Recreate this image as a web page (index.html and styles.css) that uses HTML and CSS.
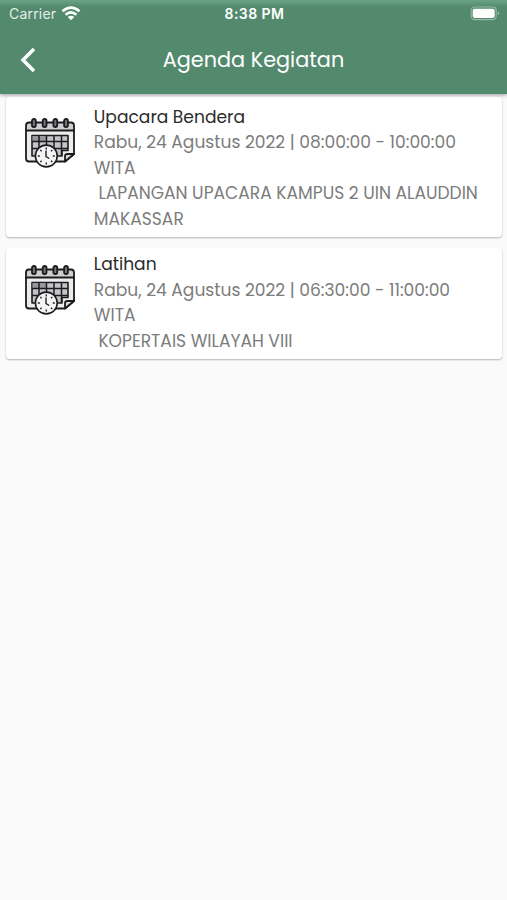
FILE: index.html
```html
<!DOCTYPE html>
<html lang="id">
<head>
<meta charset="utf-8">
<title>Agenda Kegiatan</title>
<link rel="stylesheet" href="styles.css">
</head>
<body>
<svg class="defs" width="0" height="0" aria-hidden="true">
  <symbol id="calendar" viewBox="0 0 50 50">
    <g stroke="#1c1c1f" stroke-width="1.8" stroke-linejoin="round">
      <path d="M1 13V7.500Q1 4.500 4 4.500H46Q49 4.500 49 7.500V13Z" fill="#cfcfd1"/>
      <path d="M1 12.500V40.500Q1 43.500 4 43.500H40L49 36V12.500Z" fill="#ececec"/>
      <path d="M40 43.500V38Q40 36 42.500 36H49Z" fill="#dcdcdc"/>
      <path d="M7 17.500H43V32.500H37V38H7Z" fill="#c4c4c8" stroke-width="1.600"/>
      <path d="M7.500 18H21V23H7.500Z" fill="#98989c" stroke="none"/>
      <path d="M7 23.500H43M7 30.500H43M14 17.500V38M21.500 17.500V36M29 17.500V36M36.500 17.500V38" fill="none" stroke-width="1.500"/>
      <rect x="7" y="1" width="3.800" height="8" rx="1.800" fill="#77777b"/>
      <rect x="17.700" y="1" width="3.800" height="8" rx="1.800" fill="#77777b"/>
      <rect x="28.400" y="1" width="3.800" height="8" rx="1.800" fill="#77777b"/>
      <rect x="39.100" y="1" width="3.800" height="8" rx="1.800" fill="#77777b"/>
      <circle cx="21.300" cy="38" r="10.900" fill="#f4f4f4" stroke-width="1.600"/>
    </g>
    <path d="M21.300 29.500V31.500M21.300 44.500V46.500M12.800 38H14.800M27.800 38H29.800M15.300 32L16.600 33.300M27.300 32L26 33.300M15.300 44L16.600 42.700M27.300 44L26 42.700M21 32.500V38.500L24.300 40.500" fill="none" stroke="#222225" stroke-width="1.400"/>
  </symbol>
</svg>
<header class="header">
  <div class="status">
    <div class="carrier"><span class="carrier-name">Carrier</span>
      <svg class="wifi" width="20" height="15" viewBox="0 0 20 15" fill="none" stroke="#fff" stroke-width="2.700"><path d="M1.500 5.300Q10-2 18.500 5.300M4.600 8.700Q10 4 15.400 8.700"/><path d="M10 14.200L6.800 11Q10 8.400 13.200 11Z" fill="#fff" stroke="none"/></svg>
    </div>
    <span class="time">8:38 PM</span>
    <svg class="battery" width="30" height="15" viewBox="0 0 30 15"><rect x="1.200" y="1" width="25" height="12.600" rx="3.500" fill="none" stroke="#fff" stroke-opacity=".4" stroke-width="1.100"/><rect x="2.700" y="2.700" width="22" height="9.200" rx="1.800" fill="#fff"/><path d="M27.800 5.300Q30.200 7.300 27.800 9.300Z" fill="#fff" fill-opacity=".5"/></svg>
  </div>
  <div class="bar">
    <svg class="back" width="16" height="26" viewBox="0 0 16 26" fill="none" stroke="#fff" stroke-width="3.500"><path d="M14 2L3 13L14 24"/></svg>
    <h1 class="title">Agenda Kegiatan</h1>
  </div>
</header>
<main class="list">
  <article class="card first">
    <svg class="icon"><use href="#calendar"/></svg>
    <div class="text">
      <h2 class="name">Upacara Bendera</h2>
      <p class="line">Rabu, 24 Agustus 2022 | 08:00:00 - 10:00:00 WITA</p>
      <p class="line"> LAPANGAN UPACARA KAMPUS 2 UIN ALAUDDIN MAKASSAR</p>
    </div>
  </article>
  <article class="card">
    <svg class="icon"><use href="#calendar"/></svg>
    <div class="text">
      <h2 class="name">Latihan</h2>
      <p class="line">Rabu, 24 Agustus 2022 | 06:30:00 - 11:00:00 WITA</p>
      <p class="line"> KOPERTAIS WILAYAH VIII</p>
    </div>
  </article>
</main>
</body>
</html>
```
FILE: styles.css
```css
* { box-sizing: border-box; }
body {
  margin: 0;
  min-height: 900px;
  background: #fafafa;
  font-family: Poppins, Inter, sans-serif;
}
h1, h2, p { margin: 0; font-weight: 400; }
.defs { display: block; height: 0; }
.header {
  height: 94px;
  color: #fff;
  background: linear-gradient(#6aa386 0, #538a6e 7px);
  box-shadow: 0 1px 4px rgba(0, 0, 0, .4);
}
.status {
  height: 27px;
  padding: 0 7px 0 9px;
  display: grid;
  grid-template-columns: 1fr auto 1fr;
  align-items: center;
  font-family: Inter, sans-serif;
  font-size: 14px;
}
.carrier { display: flex; align-items: center; gap: 5px; }
.carrier-name { color: #e2eee8; letter-spacing: .2px; }
.time { font-weight: 600; letter-spacing: .45px; }
.battery { justify-self: end; }
.bar {
  height: 67px;
  padding: 0 20px 2px;
  display: grid;
  grid-template-columns: 1fr auto 1fr;
  align-items: center;
}
.title { font-size: 20.8px; line-height: 32px; }
.list { padding: 3px 5px 5.5px 5.5px; display: flex; flex-direction: column; gap: 11px; }
.card {
  display: flex;
  gap: 19px;
  padding: 4.3px 20px 4.3px 19.3px;
  background: #fff;
  border-radius: 4px;
  box-shadow: 0 1px 2px rgba(0, 0, 0, .28);
}
.first { padding-top: 7.6px; }
.icon { width: 50px; height: 50px; margin-top: 13px; flex: none; }
.text { flex: 1; font-size: 17.1px; line-height: 25.6px; }
.name { font-size: inherit; color: #2b2b2b; }
.line { color: #7c7c7c; white-space: pre-wrap; }
```
